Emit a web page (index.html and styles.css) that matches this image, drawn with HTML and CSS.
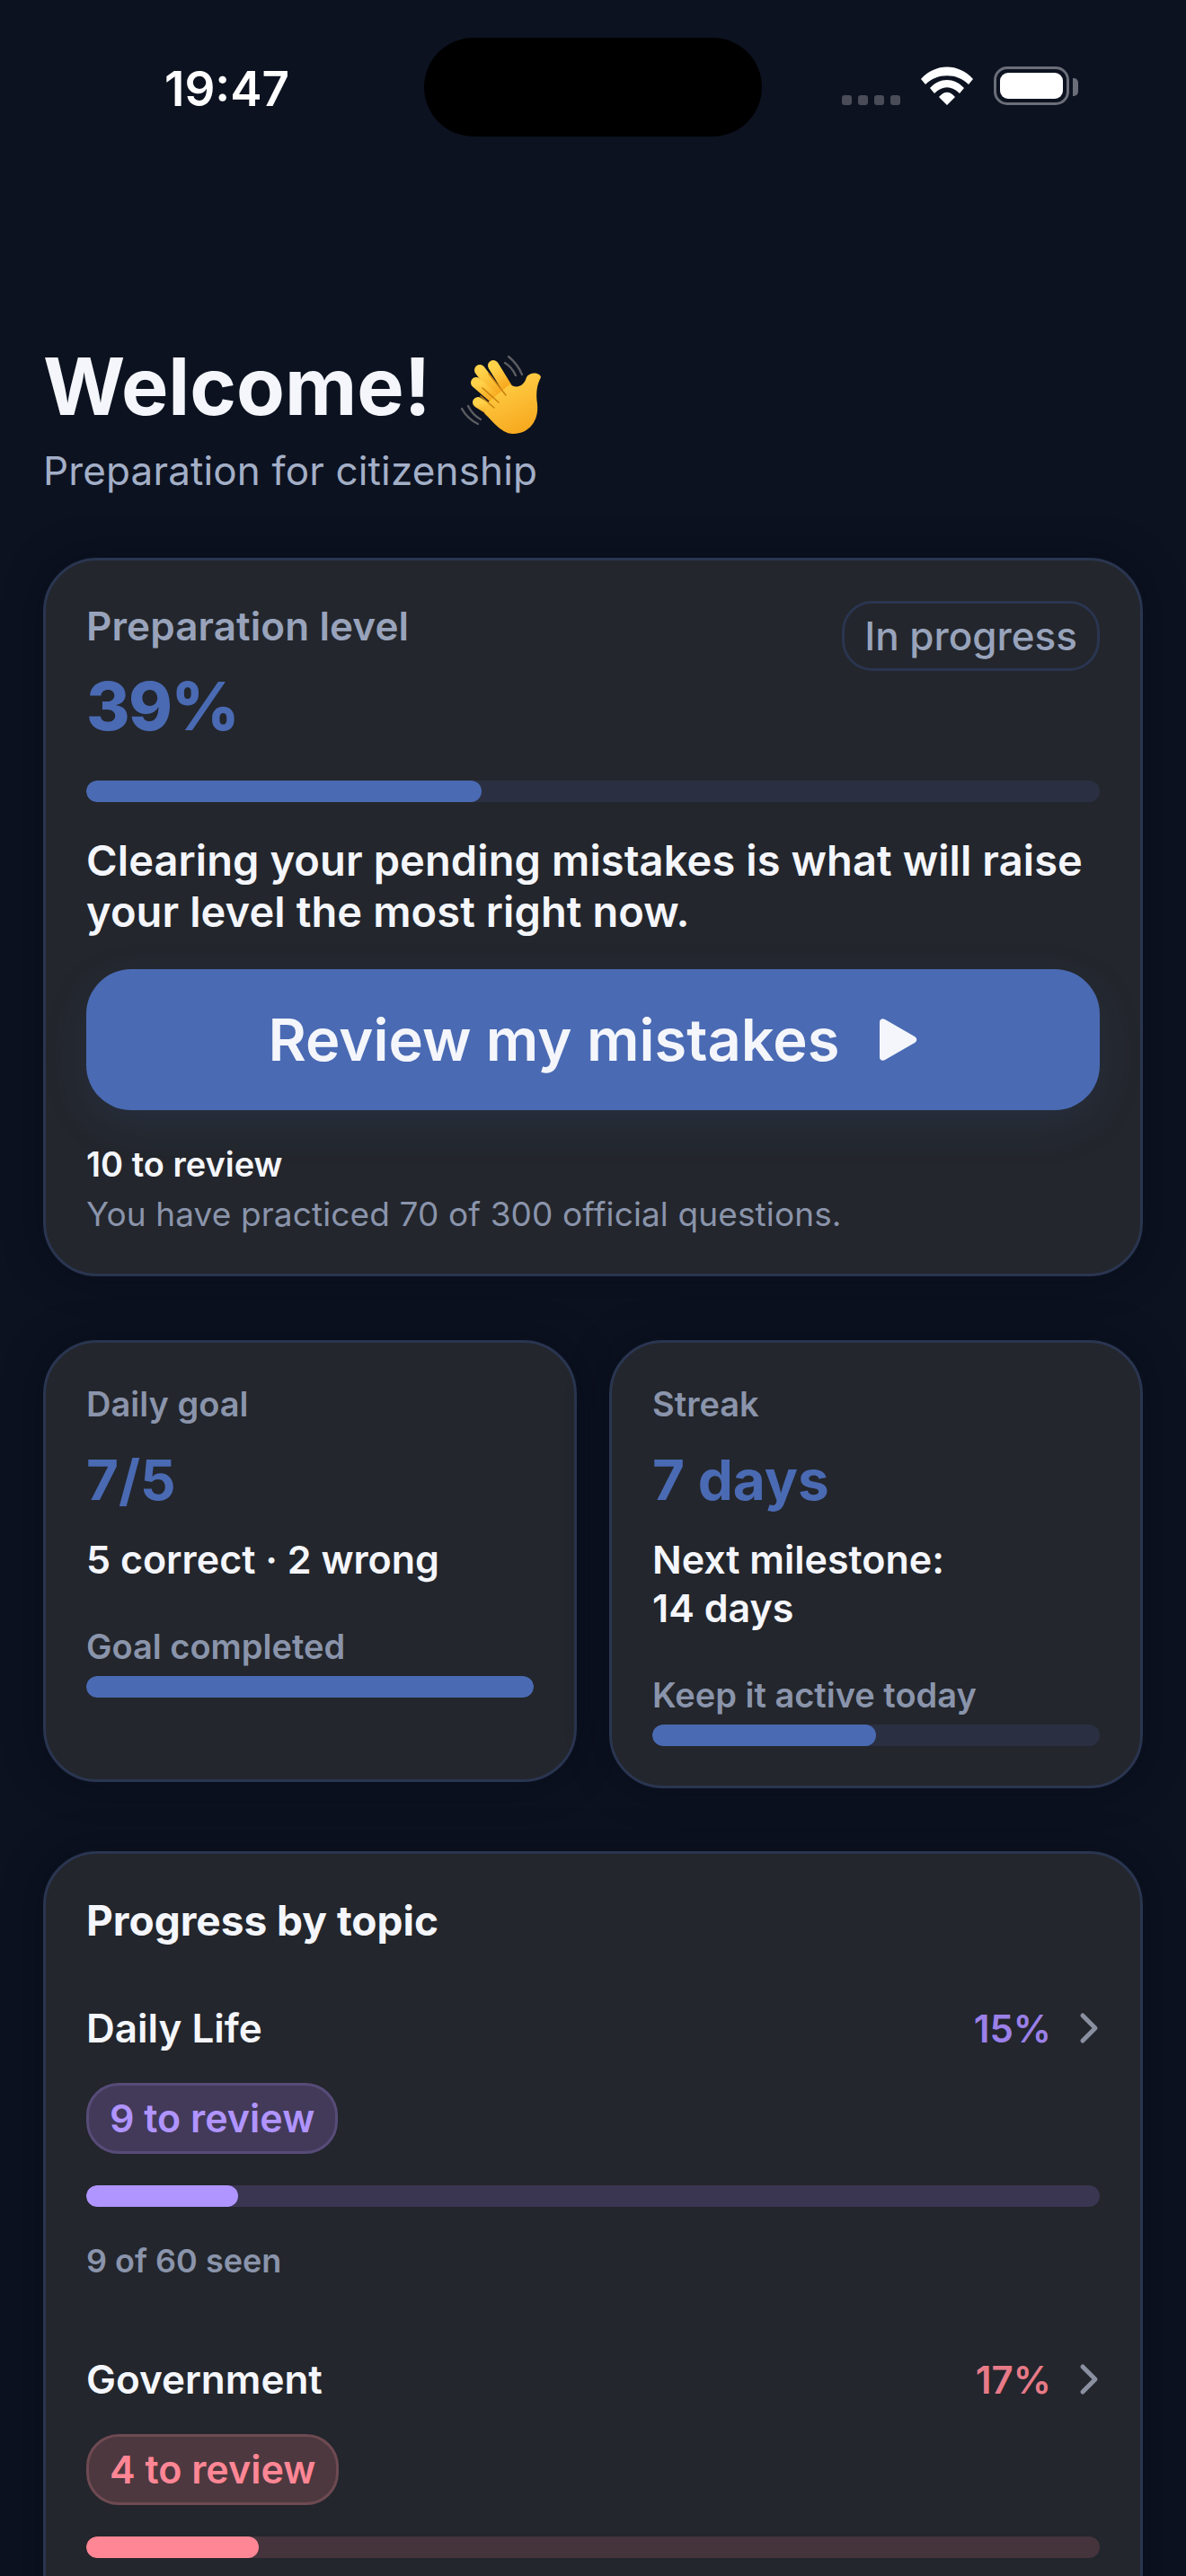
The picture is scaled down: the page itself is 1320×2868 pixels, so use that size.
FILE: index.html
```html
<!DOCTYPE html>
<html lang="en">
<head>
<meta charset="utf-8">
<title>Welcome</title>
<link rel="stylesheet" href="styles.css">
</head>
<body>
<div class="status">
  <div class="time">19:47</div>
  <div class="island"></div>
  <div class="sys">
    <div class="dots"><i></i><i></i><i></i><i></i></div>
    <svg class="wifi" width="58" height="43" viewBox="0 0 58 43"><path fill="#fff" d="M0 14 C16 -4 42 -4 58 14 L53 20 C40 7 18 7 5 20 Z M10 24 C21 12 37 12 48 24 L43 30 C34 21 24 21 15 30 Z M20 34 C26 27 32 27 38 34 L29 43 Z"/></svg>
    <div class="battery"><div class="battery-fill"></div><div class="battery-nub"></div></div>
  </div>
</div>

<header class="head">
  <h1 class="title">Welcome!
    <svg class="wave" width="160" height="120" viewBox="0 0 160 120">
      <defs><linearGradient id="hand" x1="0.3" y1="0" x2="0.7" y2="1"><stop offset="0" stop-color="#ffd24a"/><stop offset="1" stop-color="#f7a71d"/></linearGradient></defs>
      <g fill="none" stroke="#5c5d61" stroke-width="2.4" stroke-linecap="round"><path d="M85 27 Q95 35 100 47"/><path d="M81 34 Q89 39 93 48"/><path d="M33 85 Q39 96 51 102"/><path d="M40 82 Q45 92 54 97"/></g>
      <g fill="none" stroke="url(#hand)" stroke-width="12" stroke-linecap="round"><path d="M68 37 L84 63"/><path d="M53 42 L76 72"/><path d="M49 56 L72 76"/><path d="M51 78 L70 90"/></g>
      <path fill="url(#hand)" d="M62 78 L86 58 C96 64 103 58 105 50 C108 44 120 44 121 50 C117 58 115 66 117 80 C119 98 108 113 90 113 C78 113 68 100 58 90 Z"/>
      <g fill="none" stroke="#c9800f" stroke-width="1.6" stroke-linecap="round"><path d="M63 46 L82 70"/><path d="M56 62 L74 78"/><path d="M54 71 L69 84"/></g>
    </svg>
  </h1>
  <p class="subtitle">Preparation for citizenship</p>
</header>

<section class="card hero">
  <div class="hero-top">
    <div>
      <div class="label">Preparation level</div>
      <div class="big">39%</div>
    </div>
    <div class="state">In progress</div>
  </div>
  <div class="bar hero-bar"><div class="bar-fill fill-39"></div></div>
  <p class="advice">Clearing your pending mistakes is what will raise your level the most right now.</p>
  <button class="cta">Review my mistakes
    <svg class="play" width="42" height="47" viewBox="0 0 42 47"><path fill="#f4f6fb" d="M0 4 C0 1 3 -1 6 1 L39 20 C42 22 42 25 39 27 L6 46 C3 48 0 46 0 43 Z"/></svg>
  </button>
  <div class="count">10 to review</div>
  <div class="note">You have practiced 70 of 300 official questions.</div>
</section>

<div class="pair">
  <section class="card mini">
    <div class="mini-label">Daily goal</div>
    <div class="mid">7/5</div>
    <div class="mini-text">5 correct · 2 wrong</div>
    <div class="mini-foot">Goal completed</div>
    <div class="bar"><div class="bar-fill fill-100"></div></div>
  </section>
  <section class="card mini">
    <div class="mini-label">Streak</div>
    <div class="mid">7 days</div>
    <div class="mini-text">Next milestone:<br>14 days</div>
    <div class="mini-foot">Keep it active today</div>
    <div class="bar"><div class="bar-fill fill-50"></div></div>
  </section>
</div>

<section class="card topics">
  <h2 class="topics-title">Progress by topic</h2>
  <div class="topic violet">
    <div class="topic-row">
      <span class="topic-name">Daily Life</span>
      <span class="topic-right"><span class="pct">15%</span>
        <svg class="chev" width="24" height="36" viewBox="0 0 24 36"><path fill="none" stroke="#8a90a0" stroke-width="5" stroke-linecap="round" stroke-linejoin="round" d="M5 4 L19 18 L5 32"/></svg>
      </span>
    </div>
    <div class="tag">9 to review</div>
    <div class="bar topic-bar"><div class="bar-fill fill-15"></div></div>
    <div class="seen">9 of 60 seen</div>
  </div>
  <div class="topic rose">
    <div class="topic-row">
      <span class="topic-name">Government</span>
      <span class="topic-right"><span class="pct">17%</span>
        <svg class="chev" width="24" height="36" viewBox="0 0 24 36"><path fill="none" stroke="#8a90a0" stroke-width="5" stroke-linecap="round" stroke-linejoin="round" d="M5 4 L19 18 L5 32"/></svg>
      </span>
    </div>
    <div class="tag">4 to review</div>
    <div class="bar topic-bar"><div class="bar-fill fill-17"></div></div>
  </div>
</section>
</body>
</html>
```

FILE: styles.css
```css
* { box-sizing: border-box; }
html, body { margin: 0; height: 2868px; overflow: hidden; }
body {
  padding: 0 48px;
  background: #0c1220;
  color: #f4f6fb;
  font-family: "Inter", "Liberation Sans", sans-serif;
}

.status { display: flex; height: 152px; margin: 0 -48px; padding-top: 42px; }
.time {
  width: 472px; padding: 26px 0 0 183px;
  font-weight: 600; font-size: 53px; line-height: 62px; color: #fff;
}
.island { width: 376px; height: 110px; border-radius: 55px; background: #000; }
.sys { display: flex; align-items: flex-end; height: 75px; padding-left: 89px; }
.dots { display: flex; gap: 7px; }
.dots i { width: 11px; height: 11px; border-radius: 3px; background: #4a4d57; }
.wifi { margin-left: 23px; }
.battery {
  position: relative; width: 84px; height: 43px; margin-left: 23px; padding: 4px;
  border: 3px solid #6b6e78; border-radius: 15px;
}
.battery-fill { height: 100%; border-radius: 9px; background: #fff; }
.battery-nub { position: absolute; right: -13px; top: 10px; width: 6px; height: 20px; border-radius: 0 5px 5px 0; background: #6b6e78; }

.head { padding-top: 228px; height: 469px; }
.title {
  display: flex; align-items: center; margin: 0; height: 100px;
  font-size: 88px; line-height: 100px; font-weight: 700; letter-spacing: 0;
}
.wave { margin-left: 2px; flex: none; }
.subtitle { margin: 16px 0 0; font-size: 44px; line-height: 56px; font-weight: 400; letter-spacing: 0.15px; color: #a3afc7; }

.card {
  border: 3px solid #2a3550; border-radius: 60px; background: #23262c;
  box-shadow: 0 0 40px rgba(6, 10, 24, 0.5);
}
.hero { height: 800px; padding: 45px; }
.hero-top { display: flex; justify-content: space-between; height: 200px; }
.label { font-size: 44px; line-height: 56px; font-weight: 600; letter-spacing: 0.1px; color: #98a3bb; }
.big { margin-top: 16px; font-size: 74px; line-height: 90px; font-weight: 800; letter-spacing: -1.5px; color: #4a6ab3; }
.state {
  height: 78px; padding: 0 22px; border: 3px solid #2a3550; border-radius: 34px;
  font-size: 44px; line-height: 72px; font-weight: 500; color: #98a3bb;
}
.bar { height: 24px; border-radius: 12px; background: #2a3042; overflow: hidden; }
.bar-fill { height: 100%; border-radius: 12px; background: #4a6ab3; }
.fill-39 { width: 39%; }
.fill-100 { width: 100%; }
.fill-50 { width: 50%; }
.fill-15 { width: 15%; }
.fill-17 { width: 17%; }
.advice { margin: 36px 0 0; font-size: 47px; line-height: 57px; font-weight: 600; letter-spacing: 0.1px; }
.cta {
  display: flex; align-items: center; justify-content: center; gap: 45px;
  width: 100%; height: 157px; margin-top: 36px; padding: 0; border: 0; border-radius: 50px;
  background: #4a6ab3; color: #f4f6fb;
  font-family: inherit; font-size: 65px; font-weight: 600;
  box-shadow: 0 16px 50px rgba(74, 106, 179, 0.14);
}
.count { margin-top: 35px; font-size: 38px; line-height: 50px; font-weight: 600; }
.note { margin-top: 6px; font-size: 37px; line-height: 50px; font-weight: 400; letter-spacing: 0.12px; color: #8a94ab; }

.pair { display: flex; align-items: flex-start; gap: 36px; margin-top: 71px; }
.mini { flex: 1; padding: 43px 45px 45px; }
.mini:first-child { height: 492px; }
.mini:last-child { height: 499px; }
.mini-label, .mini-foot { font-size: 38px; line-height: 50px; font-weight: 600; color: #8a94ab; }
.mid { margin-top: 22px; font-size: 62px; line-height: 76px; font-weight: 700; color: #4a6ab3; }
.mini-text { margin-top: 23px; font-size: 43px; line-height: 54px; font-weight: 600; }
.mini-foot { margin-top: 45px; margin-bottom: 8px; }

.topics { margin-top: 70px; height: 900px; padding: 45px; }
.topics-title { margin: 0; font-size: 46px; line-height: 58px; font-weight: 700; }
.topic-row { display: flex; justify-content: space-between; align-items: center; height: 56px; margin-top: 63px; }
.rose .topic-row { margin-top: 79px; }
.topic-name { font-size: 44px; font-weight: 600; }
.topic-right { display: flex; align-items: center; gap: 30px; }
.pct { font-size: 42px; font-weight: 600; }
.tag {
  width: fit-content; height: 79px; margin-top: 33px; padding: 0 23px; border-radius: 36px; border: 3px solid;
  font-size: 43px; line-height: 73px; font-weight: 600;
}
.topic-bar { margin-top: 35px; }
.seen { margin-top: 35px; font-size: 36px; line-height: 50px; font-weight: 600; color: #8a94ab; }
.violet .pct { color: #9a80e8; }
.violet .tag { background: #433a5a; border-color: #574c78; color: #b094ff; }
.violet .bar { background: #3a3550; }
.violet .bar-fill { background: #b094ff; }
.rose .pct { color: #e87a88; }
.rose .tag { background: #4d383f; border-color: #6e4a52; color: #ff8695; }
.rose .bar { background: #45343c; }
.rose .bar-fill { background: #ff8695; }
```
